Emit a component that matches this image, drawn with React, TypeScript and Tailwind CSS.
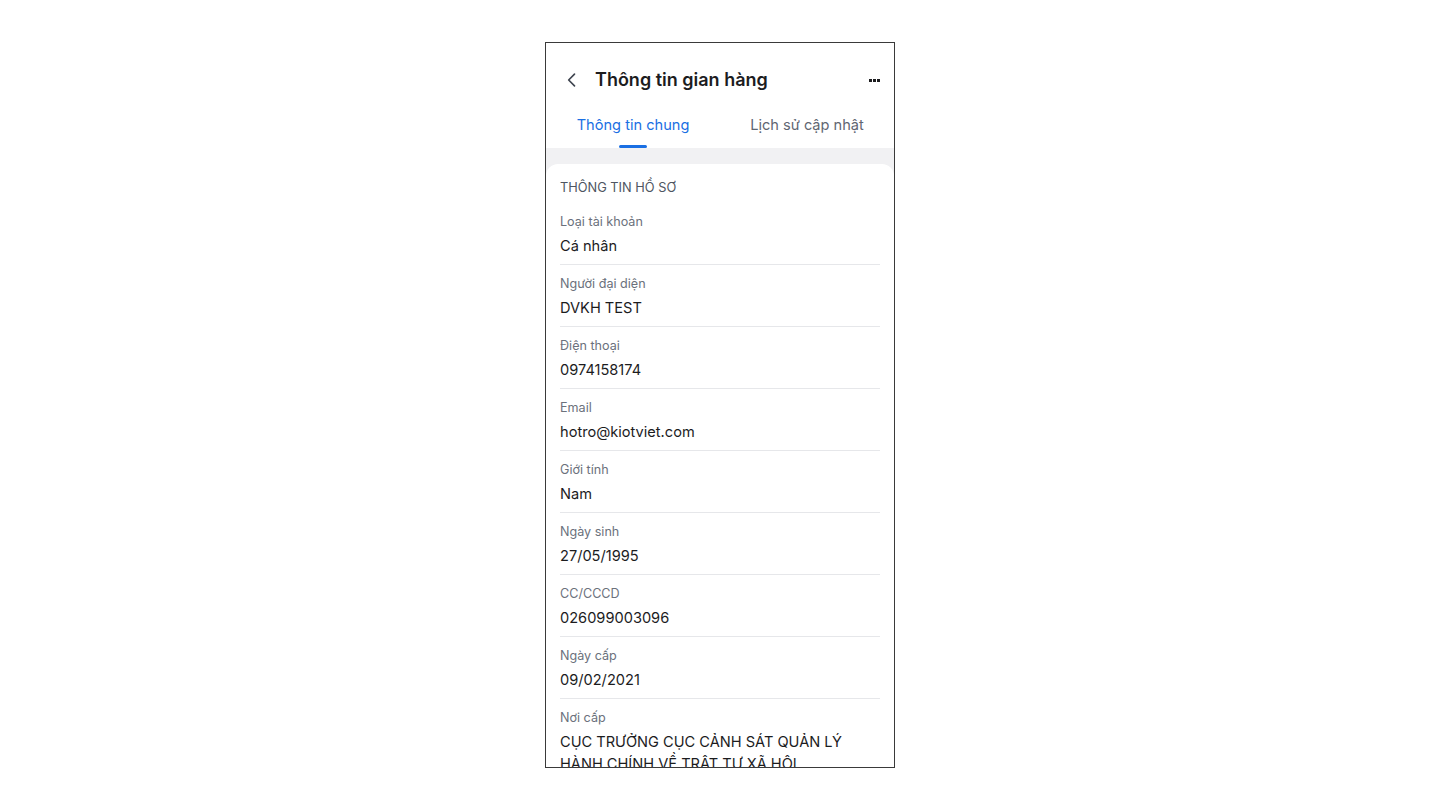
const rows = [
  { label: "Loại tài khoản", value: "Cá nhân" },
  { label: "Người đại diện", value: "DVKH TEST" },
  { label: "Điện thoại", value: "0974158174" },
  { label: "Email", value: "hotro@kiotviet.com" },
  { label: "Giới tính", value: "Nam" },
  { label: "Ngày sinh", value: "27/05/1995" },
  { label: "CC/CCCD", value: "026099003096" },
  { label: "Ngày cấp", value: "09/02/2021" },
  { label: "Nơi cấp", value: "CỤC TRƯỞNG CỤC CẢNH SÁT QUẢN LÝ HÀNH CHÍNH VỀ TRẬT TỰ XÃ HỘI" },
];

export default function App() {
  return (
    <div className="min-h-[810px] w-full bg-white pt-[42px] font-['Inter','Noto_Sans',sans-serif]">
      <div className="mx-auto flex h-[726px] w-[350px] flex-col overflow-hidden border border-[#3a3a3a] bg-white">
        {/* header */}
        <div className="flex shrink-0 items-center px-[14px] pt-[25px] pb-3">
          <button className="flex h-6 w-6 items-center justify-center text-[#3f4550]">
            <svg width="20" height="20" viewBox="0 0 24 24" fill="none" stroke="currentColor" strokeWidth="2" strokeLinecap="round" strokeLinejoin="round">
              <path d="M15 5l-7 7 7 7" />
            </svg>
          </button>
          <h1 className="ml-[11px] flex-1 text-[18px] font-semibold leading-6 text-[#1c1c1e]">Thông tin gian hàng</h1>
          <div className="flex items-center gap-[1px]">
            <span className="h-[3px] w-[3px] bg-[#1c1c1e]" />
            <span className="h-[3px] w-[3px] bg-[#1c1c1e]" />
            <span className="h-[3px] w-[3px] bg-[#1c1c1e]" />
          </div>
        </div>

        {/* tabs */}
        <div className="flex h-[44px] shrink-0">
          <div className="relative flex flex-1 items-center justify-center pb-[1px]">
            <span className="text-[14.6px] text-[#1a6fe3]">Thông tin chung</span>
            <span className="absolute bottom-0 left-1/2 h-[3px] w-[28px] -translate-x-1/2 rounded-full bg-[#1a6fe3]" />
          </div>
          <div className="flex flex-1 items-center justify-center pb-[1px]">
            <span className="text-[14.6px] text-[#5f6672]">Lịch sử cập nhật</span>
          </div>
        </div>

        {/* content */}
        <div className="shrink-0 bg-[#f1f1f3] pt-[16px]">
          <div className="rounded-t-xl bg-white px-[14px] pt-[14px]">
            <div className="text-[12.8px] uppercase leading-5 text-[#4e5561]">Thông tin hồ sơ</div>
            <div className="mt-[5px]">
              {rows.map((r, i) => (
                <div key={r.label} className={`pt-[9px] pb-[7px] ${i < rows.length - 1 ? "border-b border-[#e6e7ea]" : ""}`}>
                  <div className="text-[12.6px] leading-5 text-[#6b717c]">{r.label}</div>
                  <div className="mt-[3px] text-[14.6px] leading-[22px] text-[#1c1c1e]">{r.value}</div>
                </div>
              ))}
            </div>
          </div>
        </div>
      </div>
    </div>
  );
}
